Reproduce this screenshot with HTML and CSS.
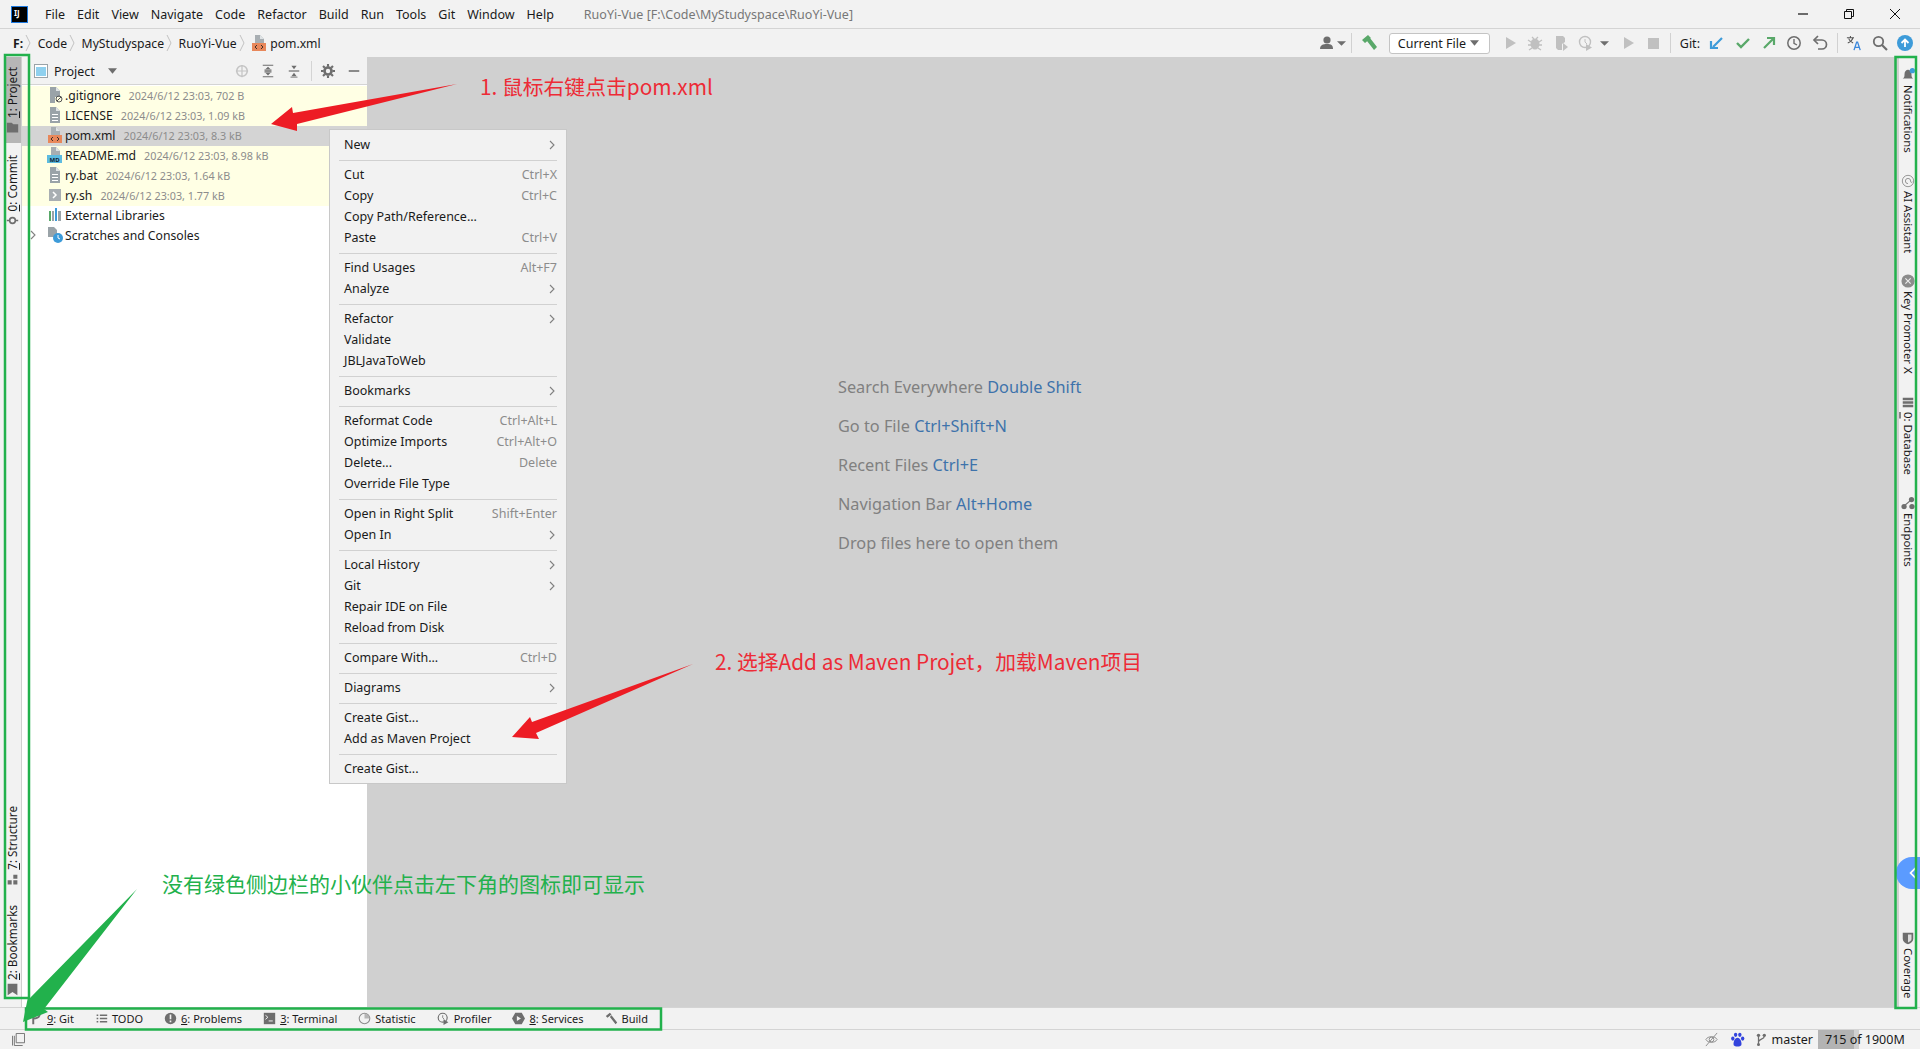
FILE: index.html
```html
<!DOCTYPE html>
<html lang="en">
  <head>
    <meta charset="UTF-8" />
    <title>RuoYi-Vue</title>
    <link rel="stylesheet" href="styles.css">
  </head>
  <body>
    <svg class="defs" width="0" height="0">
      <symbol id="i-doc-lines" viewBox="0 0 16 16"><path d="M3 0h6l4 4v12H3z" fill="#9aa3a8"/><path d="M9 0l4 4H9z" fill="#dfe3e5"/><path d="M5 7h6v1H5zM5 10h6v1H5zM5 13h6v1H5z" fill="#fff"/></symbol>
      <symbol id="i-xml" viewBox="0 0 16 16"><path d="M4 0h5l4 4v4H4z" fill="#a8aeb2"/><path d="M9 0l4 4H9z" fill="#dfe3e5"/><rect x="1" y="8" width="14" height="8" fill="#e8875a"/><path d="M6 10l-2 2 2 2M10 10l2 2-2 2" fill="none" stroke="#40302a"/></symbol>
      <symbol id="i-chev" viewBox="0 0 6 10"><path d="M1 1l4 4-4 4" fill="none" stroke="#808080" stroke-width="1.1"/></symbol>
      <symbol id="i-crumb" viewBox="0 0 6 18"><path d="M1 1l4 8-4 8" fill="none" stroke="#c2c2c2"/></symbol>
    </svg>

    <header class="titlebar">
      <div class="app-logo"><span>IJ</span></div>
      <nav class="menubar">
        <span>File</span><span>Edit</span><span>View</span><span>Navigate</span><span>Code</span><span>Refactor</span><span>Build</span><span>Run</span><span>Tools</span><span>Git</span><span>Window</span><span>Help</span>
      </nav>
      <div class="window-title">RuoYi-Vue [F:\Code\MyStudyspace\RuoYi-Vue]</div>
      <div class="window-controls">
        <svg viewBox="0 0 12 12"><path d="M1 6h10" stroke="#111" stroke-width="1.2"/></svg>
        <svg viewBox="0 0 12 12"><path d="M1.5 3.5h7v7h-7zM3.5 3.5v-2h7v7h-2" fill="none" stroke="#111"/></svg>
        <svg viewBox="0 0 12 12"><path d="M1 1l10 10M11 1L1 11" stroke="#111"/></svg>
      </div>
    </header>

    <div class="navbar">
      <div class="crumbs">
        <b>F:</b><svg class="crumb-sep"><use href="#i-crumb"/></svg>
        <span>Code</span><svg class="crumb-sep"><use href="#i-crumb"/></svg>
        <span>MyStudyspace</span><svg class="crumb-sep"><use href="#i-crumb"/></svg>
        <span>RuoYi-Vue</span><svg class="crumb-sep"><use href="#i-crumb"/></svg>
        <svg class="tree-icon"><use href="#i-xml"/></svg>
        <span>pom.xml</span>
      </div>
      <div class="tools">
        <span class="tool narrow"><svg viewBox="0 0 16 16"><circle cx="8" cy="5" r="3.6" fill="#6e6e6e"/><path d="M1 14c0-4 3-5 7-5s6 1 6 5z" fill="#6e6e6e"/></svg></span>
        <span class="tool tiny"><svg viewBox="0 0 8 8"><path d="M0 2h8L4 6z" fill="#6e6e6e"/></svg></span>
        <i class="tool-sep"></i>
        <span class="tool"><svg viewBox="0 0 16 16"><path d="M1 5l6-5 3 3-6 5zM6 6l3-3 7 9-3 3z" fill="#59a869"/></svg></span>
        <div class="combo">Current File<svg viewBox="0 0 10 6"><path d="M0 0h10L5 6z" fill="#6e6e6e"/></svg></div>
        <span class="tool"><svg viewBox="0 0 16 16"><path d="M4 2l10 6-10 6z" fill="#c0c0c0"/></svg></span>
        <span class="tool"><svg viewBox="0 0 16 16"><ellipse cx="8" cy="9" rx="4.5" ry="5.5" fill="#c0c0c0"/><path d="M1 5l3 2M15 5l-3 2M1 10h3M15 10h-3M2 15l3-2M14 15l-3-2M5 2l2 2M11 2L9 4" stroke="#c0c0c0" stroke-width="1.3"/></svg></span>
        <span class="tool"><svg viewBox="0 0 16 16"><path d="M3 1h7l2 2v4l-3 2v6H5l-2-2z" fill="#c0c0c0"/><path d="M10 8l5 4-5 4z" fill="#c0c0c0"/></svg></span>
        <span class="tool"><svg viewBox="0 0 16 16"><circle cx="7" cy="7" r="5.5" fill="none" stroke="#c0c0c0" stroke-width="1.4"/><path d="M7 4v3l2 2" fill="none" stroke="#c0c0c0"/><path d="M8 9l6 3.5L8 16z" fill="#c0c0c0"/></svg></span>
        <span class="tool tiny spaced"><svg viewBox="0 0 8 8"><path d="M0 2h8L4 6z" fill="#6e6e6e"/></svg></span>
        <span class="tool"><svg viewBox="0 0 16 16"><path d="M4 2l10 6-10 6z" fill="#c0c0c0"/></svg></span>
        <span class="tool"><svg viewBox="0 0 16 16"><rect x="3" y="3" width="11" height="11" fill="#c0c0c0"/></svg></span>
        <i class="tool-sep"></i>
        <span class="git-label">Git:</span>
        <span class="tool git-in"><svg viewBox="0 0 16 16"><path d="M14 3L5 12M3 6v7h7" fill="none" stroke="#3d9bd9" stroke-width="2.2"/></svg></span>
        <span class="tool"><svg viewBox="0 0 16 16"><path d="M2 8l4 4 8-8" fill="none" stroke="#59a869" stroke-width="2.4"/></svg></span>
        <span class="tool"><svg viewBox="0 0 16 16"><path d="M3 13l9-9M6 3h7v7" fill="none" stroke="#59a869" stroke-width="2.2"/></svg></span>
        <span class="tool"><svg viewBox="0 0 16 16"><circle cx="8" cy="8" r="6.2" fill="none" stroke="#6e6e6e" stroke-width="1.5"/><path d="M8 4v4.4l3 1.6" fill="none" stroke="#6e6e6e" stroke-width="1.4"/></svg></span>
        <span class="tool"><svg viewBox="0 0 16 16"><path d="M2 5h8a4 4 0 0 1 0 9H6" fill="none" stroke="#6e6e6e" stroke-width="1.7"/><path d="M6 1L2 5l4 4" fill="none" stroke="#6e6e6e" stroke-width="1.7"/></svg></span>
        <i class="tool-sep"></i>
        <span class="tool"><svg viewBox="0 0 18 18"><path d="M1 3h8M5 1v2M2 9c3-1 5-3 6-6M3 4c1 3 3 4 5 5" fill="none" stroke="#555" stroke-width="1.2"/><path d="M9 17l3-9h1l3 9M10 14h5" fill="none" stroke="#3b87dc" stroke-width="1.5"/></svg></span>
        <span class="tool"><svg viewBox="0 0 16 16"><circle cx="6.5" cy="6.5" r="4.7" fill="none" stroke="#6e6e6e" stroke-width="1.8"/><path d="M10 10l5 5" stroke="#6e6e6e" stroke-width="2.2"/></svg></span>
        <span class="tool"><svg viewBox="0 0 16 16"><circle cx="8" cy="8" r="8" fill="#3d9bd9"/><path d="M4.5 8L8 4.5 11.5 8M8 5v7" fill="none" stroke="#fff" stroke-width="1.8"/></svg></span>
      </div>
    </div>

    <main class="workspace">
      <aside class="strip strip-left">
        <div class="vtab active"><span><u>1</u>: Project</span><svg viewBox="0 0 16 14"><path d="M1 1h6l2 2h6v10H1z" fill="#6e6e6e"/></svg></div>
        <div class="vtab"><span><u>0</u>: Commit</span><svg viewBox="0 0 16 16"><circle cx="8" cy="8" r="3.5" fill="none" stroke="#6e6e6e" stroke-width="2"/><path d="M1 8h3M12 8h3" stroke="#6e6e6e" stroke-width="2"/></svg></div>
        <div class="vtab bottom-first"><span><u>7</u>: Structure</span><svg viewBox="0 0 16 16"><path d="M9 2h5v5H9zM2 9h5v5H2zM9 9h5v5H9z" fill="#6e6e6e"/></svg></div>
        <div class="vtab"><span><u>2</u>: Bookmarks</span><svg viewBox="0 0 16 16"><path d="M2 1h12v14l-6-4-6 4z" fill="#6e6e6e"/></svg></div>
      </aside>

      <section class="project">
        <div class="project-head">
          <svg class="head-pane" viewBox="0 0 14 14"><rect x=".5" y=".5" width="13" height="13" fill="#fff" stroke="#9aa3a8"/><rect x="2" y="3" width="10" height="9" fill="#8fd0ee"/></svg>
          <span>Project</span>
          <svg class="head-caret" viewBox="0 0 10 6"><path d="M0 0h10L5 6z" fill="#6e6e6e"/></svg>
          <div class="head-tools">
            <svg viewBox="0 0 16 16"><circle cx="8" cy="8" r="6" fill="none" stroke="#c4c4c4" stroke-width="1.8"/><path d="M8 1v14M1 8h14" stroke="#c4c4c4" stroke-width="1.4"/></svg>
            <svg viewBox="0 0 16 16"><path d="M2 1.5h12M2 14.5h12M4 9h8M4 7h8" stroke="#6e6e6e" stroke-width="1.2"/><path d="M8 3l3 3H5zM8 13l3-3H5z" fill="#6e6e6e"/></svg>
            <svg viewBox="0 0 16 16"><path d="M2 8h12" stroke="#6e6e6e" stroke-width="1.4"/><path d="M5 2h6L8 6zM5 14h6l-3-4z" fill="#6e6e6e"/><path d="M4 15h8" stroke="#6e6e6e"/></svg>
            <i class="head-sep"></i>
            <svg viewBox="0 0 16 16"><circle cx="8" cy="8" r="4" fill="none" stroke="#6e6e6e" stroke-width="3"/><path d="M8 0v3M8 13v3M0 8h3M13 8h3M2.3 2.3l2 2M11.7 11.7l2 2M2.3 13.7l2-2M11.7 4.300l2-2" stroke="#6e6e6e" stroke-width="2.4"/></svg>
            <svg viewBox="0 0 16 16"><path d="M2 8h12" stroke="#6e6e6e" stroke-width="1.8"/></svg>
          </div>
        </div>
        <ul class="tree">
          <li class="row changed"><svg class="tree-icon" viewBox="0 0 16 16"><path d="M3 0h6l4 4v6H8v6H3z" fill="#9aa3a8"/><path d="M9 0l4 4H9z" fill="#dfe3e5"/><circle cx="12" cy="12" r="3" fill="none" stroke="#555"/><path d="M10 14l4-4" stroke="#555"/></svg><span>.gitignore</span><em>2024/6/12 23:03, 702 B</em></li>
          <li class="row changed"><svg class="tree-icon"><use href="#i-doc-lines"/></svg><span>LICENSE</span><em>2024/6/12 23:03, 1.09 kB</em></li>
          <li class="row selected"><svg class="tree-icon"><use href="#i-xml"/></svg><span>pom.xml</span><em>2024/6/12 23:03, 8.3 kB</em></li>
          <li class="row changed"><svg class="tree-icon" viewBox="0 0 16 16"><path d="M4 0h5l4 4v4H4z" fill="#a8aeb2"/><path d="M9 0l4 4H9z" fill="#dfe3e5"/><rect y="8" width="15" height="8" fill="#5dbbe0"/><text class="md-badge" x="7.500" y="14.500">MD</text></svg><span>README.md</span><em>2024/6/12 23:03, 8.98 kB</em></li>
          <li class="row changed"><svg class="tree-icon"><use href="#i-doc-lines"/></svg><span>ry.bat</span><em>2024/6/12 23:03, 1.64 kB</em></li>
          <li class="row changed"><svg class="tree-icon" viewBox="0 0 16 16"><rect x="2" y="2" width="12" height="12" fill="#a8aeb2"/><path d="M6 5l3 3-3 3" fill="none" stroke="#fff" stroke-width="1.5"/></svg><span>ry.sh</span><em>2024/6/12 23:03, 1.77 kB</em></li>
          <li class="row"><svg class="tree-icon" viewBox="0 0 16 16"><path d="M2 4h2v10H2z" fill="#59a869"/><path d="M5 4h2v10H5z" fill="#9aa3a8"/><path d="M8 1h2v13H8z" fill="#3d9bd9"/><path d="M11 4h3v10h-3z" fill="#9aa3a8"/></svg><span>External Libraries</span></li>
          <li class="row"><svg class="tree-chev"><use href="#i-chev"/></svg><svg class="tree-icon" viewBox="0 0 16 16"><path d="M1 0h6l3 3v7H1z" fill="#9aa3a8"/><circle cx="11" cy="11" r="5" fill="#3d9bd9"/><path d="M11 8v3l2 1" fill="none" stroke="#fff"/></svg><span>Scratches and Consoles</span></li>
        </ul>
      </section>

      <section class="editor">
        <p>Search Everywhere <a>Double Shift</a></p>
        <p>Go to File <a>Ctrl+Shift+N</a></p>
        <p>Recent Files <a>Ctrl+E</a></p>
        <p>Navigation Bar <a>Alt+Home</a></p>
        <p>Drop files here to open them</p>
      </section>

      <aside class="strip strip-right">
        <div class="rtab"><svg viewBox="0 0 16 16"><path d="M2 12c2-1 2-3 2-5 0-3 2-5 4-5s4 2 4 5c0 2 0 4 2 5z" fill="#6e6e6e"/><circle cx="13" cy="3" r="3" fill="#3d9bd9"/></svg><span>Notifications</span></div>
        <div class="rtab"><svg viewBox="0 0 16 16"><circle cx="8" cy="8" r="6.500" fill="none" stroke="#8c8c8c"/><path d="M8 11a3 3 0 1 1 3-3c0 2 1 2 2 1" fill="none" stroke="#8c8c8c"/></svg><span>AI Assistant</span></div>
        <div class="rtab"><svg viewBox="0 0 16 16"><circle cx="8" cy="8" r="7.500" fill="#8c8c8c"/><path d="M5 5l6 6M11 5l-6 6" stroke="#eee" stroke-width="1.300"/></svg><span>Key Promoter X</span></div>
        <div class="rtab"><svg viewBox="0 0 16 16"><path d="M2 3h12v3H2zM2 7h12v3H2zM2 11h12v3H2z" fill="#6e6e6e"/></svg><span><u>0</u>: Database</span></div>
        <div class="rtab"><svg viewBox="0 0 16 16"><circle cx="3.500" cy="12" r="3" fill="#6e6e6e"/><circle cx="12.500" cy="12" r="3" fill="#6e6e6e"/><circle cx="12" cy="4" r="3" fill="#6e6e6e"/><path d="M4 11l7-6" stroke="#6e6e6e" stroke-width="1.500"/></svg><span>Endpoints</span></div>
        <div class="rtab last"><svg viewBox="0 0 16 16"><path d="M2 2h12v7c0 3-3 5-6 6-3-1-6-3-6-6z" fill="#6e6e6e"/><path d="M8 4h4v5c0 2-2 3-4 4z" fill="#dcdcdc"/></svg><span>Coverage</span></div>
        <div class="float-tab"><svg viewBox="0 0 10 14"><path d="M8 1L2 7l6 6" fill="none" stroke="#fff" stroke-width="2.200"/></svg></div>
      </aside>
    </main>

    <footer class="toolwindows">
      <div class="tw"><svg viewBox="0 0 16 16"><path d="M4 1v14M4 8c6 0 8-2 8-6" fill="none" stroke="#6e6e6e" stroke-width="2.400"/></svg><span><u>9</u>: Git</span></div>
      <div class="tw"><svg viewBox="0 0 16 16"><path d="M2 3h2v2H2zM2 7h2v2H2zM2 11h2v2H2zM6 3h9v2H6zM6 7h9v2H6zM6 11h9v2H6z" fill="#6e6e6e"/></svg><span>TODO</span></div>
      <div class="tw"><svg viewBox="0 0 16 16"><circle cx="8" cy="8" r="7" fill="#6e6e6e"/><path d="M7 3h2v6H7zM7 10.500h2v2H7z" fill="#f2f2f2"/></svg><span><u>6</u>: Problems</span></div>
      <div class="tw"><svg viewBox="0 0 16 16"><rect x="1" y="1" width="14" height="14" fill="#6e6e6e"/><path d="M3 4l3 2.500L3 9M7 11h5" fill="none" stroke="#f2f2f2" stroke-width="1.200"/></svg><span><u>3</u>: Terminal</span></div>
      <div class="tw"><svg viewBox="0 0 16 16"><circle cx="8" cy="8" r="6.500" fill="none" stroke="#8c8c8c" stroke-width="1.300"/><path d="M8 8V2a6 6 0 0 1 6 6z" fill="#b5b5b5"/></svg><span>Statistic</span></div>
      <div class="tw"><svg viewBox="0 0 16 16"><circle cx="7" cy="7" r="5.500" fill="none" stroke="#6e6e6e" stroke-width="1.400"/><path d="M7 4v3l2 2" fill="none" stroke="#6e6e6e"/><path d="M8 9l6 3.500L8 16z" fill="#6e6e6e"/></svg><span>Profiler</span></div>
      <div class="tw"><svg viewBox="0 0 16 16"><path d="M4 1h8l4 7-4 7H4L0 8z" fill="#6e6e6e"/><path d="M6 5l5 3-5 3z" fill="#f2f2f2"/></svg><span><u>8</u>: Services</span></div>
      <div class="tw"><svg viewBox="0 0 16 16"><path d="M1 5l5-4 2 2-5 4zM6 6l2-2 7 9-2 2z" fill="#6e6e6e"/></svg><span>Build</span></div>
    </footer>

    <footer class="statusbar">
      <svg class="status-left" viewBox="0 0 14 14"><path d="M4.500 .5h9v10h-9z" fill="none" stroke="#6e6e6e"/><path d="M2.500 3v10.500h9" fill="none" stroke="#6e6e6e"/><path d="M.5 3v10.500" stroke="#6e6e6e"/></svg>
      <div class="status-right">
        <svg viewBox="0 0 16 16"><path d="M2 8c2-4 10-4 12 0-2 4-10 4-12 0z" fill="none" stroke="#8c8c8c"/><circle cx="8" cy="8" r="2.500" fill="none" stroke="#8c8c8c"/><path d="M2 15L14 1" stroke="#8c8c8c"/></svg>
        <svg class="paw" viewBox="0 0 16 16"><ellipse cx="3" cy="7" rx="1.800" ry="2.300" fill="#3344dd"/><ellipse cx="6" cy="3" rx="1.800" ry="2.300" fill="#3344dd"/><ellipse cx="10.500" cy="3" rx="1.800" ry="2.300" fill="#3344dd"/><ellipse cx="13.500" cy="7" rx="1.800" ry="2.300" fill="#3344dd"/><path d="M8 6c-3 0-5 5-4 8 1 2 7 2 8 0 1-3-1-8-4-8z" fill="#3344dd"/></svg>
        <svg class="branch" viewBox="0 0 12 16"><circle cx="3" cy="3" r="2" fill="#6e6e6e"/><circle cx="3" cy="14" r="1.800" fill="#6e6e6e"/><circle cx="10" cy="3" r="2" fill="#6e6e6e"/><path d="M3 3v11M10 4c0 4-7 3-7 7" fill="none" stroke="#6e6e6e" stroke-width="1.500"/></svg>
        <span class="branch-name">master</span>
        <div class="memory">715 of 1900M</div>
      </div>
    </footer>

    <div class="menu">
      <div class="item">New<svg class="sub"><use href="#i-chev"/></svg></div>
      <hr />
      <div class="item">Cut<kbd>Ctrl+X</kbd></div>
      <div class="item">Copy<kbd>Ctrl+C</kbd></div>
      <div class="item">Copy Path/Reference...</div>
      <div class="item">Paste<kbd>Ctrl+V</kbd></div>
      <hr />
      <div class="item">Find Usages<kbd>Alt+F7</kbd></div>
      <div class="item">Analyze<svg class="sub"><use href="#i-chev"/></svg></div>
      <hr />
      <div class="item">Refactor<svg class="sub"><use href="#i-chev"/></svg></div>
      <div class="item">Validate</div>
      <div class="item">JBLJavaToWeb</div>
      <hr />
      <div class="item">Bookmarks<svg class="sub"><use href="#i-chev"/></svg></div>
      <hr />
      <div class="item">Reformat Code<kbd>Ctrl+Alt+L</kbd></div>
      <div class="item">Optimize Imports<kbd>Ctrl+Alt+O</kbd></div>
      <div class="item">Delete...<kbd>Delete</kbd></div>
      <div class="item">Override File Type</div>
      <hr />
      <div class="item">Open in Right Split<kbd>Shift+Enter</kbd></div>
      <div class="item">Open In<svg class="sub"><use href="#i-chev"/></svg></div>
      <hr />
      <div class="item">Local History<svg class="sub"><use href="#i-chev"/></svg></div>
      <div class="item">Git<svg class="sub"><use href="#i-chev"/></svg></div>
      <div class="item">Repair IDE on File</div>
      <div class="item">Reload from Disk</div>
      <hr />
      <div class="item">Compare With...<kbd>Ctrl+D</kbd></div>
      <hr />
      <div class="item">Diagrams<svg class="sub"><use href="#i-chev"/></svg></div>
      <hr />
      <div class="item">Create Gist...</div>
      <div class="item">Add as Maven Project</div>
      <hr />
      <div class="item">Create Gist...</div>
    </div>

    <!-- annotations drawn on top of the screenshot -->
    <svg class="marks" viewBox="0 0 1920 1049">
      <rect x="5" y="55" width="24" height="943" class="box" />
      <rect x="1895.500" y="57" width="20.500" height="951" class="box" />
      <rect x="26" y="1008.500" width="635" height="21" class="box" />
      <polygon points="457,84 293,113 292,107 271,124 297,131 297,124" fill="#ed1c24" />
      <polygon points="693,664 532,722 530,717 512,737 539,739 536,733" fill="#ed1c24" />
      <polygon points="137,889 30,998 28,997 23,1022 48,1012 44,1009" fill="#22b14c" />
    </svg>
    <div class="note red note-one">1. 鼠标右键点击pom.xml</div>
    <div class="note red note-two">2. 选择Add as Maven Projet，加载Maven项目</div>
    <div class="note green note-three">没有绿色侧边栏的小伙伴点击左下角的图标即可显示</div>
  </body>
</html>
```

FILE: styles.css
```css
* {
  box-sizing: border-box;
}

html,
body {
  margin: 0;
  height: 100%;
}

body {
  display: flex;
  flex-direction: column;
  overflow: hidden;
  background-color: #f2f2f2;
  color: #1a1a1a;
  font-family: "Noto Sans", "Open Sans", sans-serif;
  font-size: 12.5px;
}

.defs {
  position: absolute;
}

u {
  text-underline-offset: 1px;
}

/* title bar */
.titlebar {
  display: flex;
  align-items: center;
  height: 29px;
  flex: none;
  border-bottom: 1px solid #d4d4d4;
}

.app-logo {
  width: 17px;
  height: 17px;
  margin-left: 11px;
  background-color: #000;
  border: 1px solid #1f7ae0;
  color: #fff;
  font-size: 8px;
  font-weight: 700;
  line-height: 11px;
  padding-left: 2px;
}

.menubar {
  display: flex;
  gap: 12px;
  margin-left: 17px;
}

.window-title {
  margin-left: 30px;
  color: #777;
}

.window-controls {
  display: flex;
  gap: 34px;
  margin-left: auto;
  margin-right: 19px;
}

.window-controls svg {
  width: 12px;
  height: 12px;
}

/* navigation bar */
.navbar {
  display: flex;
  align-items: center;
  justify-content: space-between;
  height: 28px;
  flex: none;
  padding-left: 13px;
  padding-right: 2px;
}

.crumbs {
  display: flex;
  align-items: center;
  font-size: 12.2px;
}

.crumbs b {
  font-weight: 700;
}

.crumb-sep {
  width: 6px;
  height: 18px;
  margin: 0 6.5px 0 2px;
}

.crumbs .tree-icon {
  margin-right: 3px;
}

.tools {
  display: flex;
  align-items: center;
}

.tool {
  display: flex;
  justify-content: center;
  width: 25.5px;
}

.tool svg {
  width: 16px;
  height: 16px;
}

.tool.narrow {
  width: 16px;
}

.tool.tiny {
  width: 12px;
}

.tool.tiny svg {
  width: 9px;
  height: 9px;
}

.tool.spaced {
  margin-right: 4px;
}

.tool.git-in {
  margin-right: 2px;
}

.tool-sep {
  width: 1px;
  height: 20px;
  margin: 0 4px;
  background-color: #d1d1d1;
}

.combo {
  display: flex;
  align-items: center;
  justify-content: space-between;
  width: 101px;
  height: 21px;
  margin: 0 7px 0 7px;
  padding: 0 10px 0 8px;
  background-color: #fff;
  border: 1px solid #c4c4c4;
  border-radius: 3px;
}

.combo svg {
  width: 9px;
  height: 6px;
}

.git-label {
  margin: 0 3px 0 5px;
}

/* main area */
.workspace {
  display: flex;
  flex: 1;
  min-height: 0;
}

.strip {
  display: flex;
  flex-direction: column;
  flex: none;
}

.strip-left {
  width: 22px;
  padding-left: 4px;
  font-size: 11.7px;
  border-right: 1px solid #cfcfcf;
}

.vtab {
  display: flex;
  flex-direction: column;
  align-items: center;
  width: 16px;
  padding: 12px 0 0;
  gap: 3px;
  white-space: nowrap;
}

.vtab span {
  writing-mode: vertical-rl;
  transform: rotate(180deg);
}

.vtab svg {
  width: 13px;
  height: 13px;
  flex: none;
}

.vtab.active {
  width: 17px;
  height: 86px;
  padding: 10px 1px 0 0;
  background-color: #b6b6b6;
}

.vtab.bottom-first {
  margin-top: auto;
  margin-bottom: 19px;
}

.strip-left .vtab:last-child {
  padding: 0 0 11px;
}

.project {
  display: flex;
  flex-direction: column;
  flex: none;
  width: 345px;
  background-color: #fff;
}

.project-head {
  display: flex;
  align-items: center;
  height: 28px;
  padding-left: 12px;
  padding-top: 1px;
  background-color: #f2f2f2;
  border-bottom: 1px solid #d4d4d4;
}

.head-pane {
  width: 14px;
  height: 14px;
  margin-right: 6px;
}

.head-caret {
  width: 9px;
  height: 6px;
  margin-left: 13px;
}

.head-tools {
  display: flex;
  align-items: center;
  gap: 12px;
  margin-left: auto;
  margin-right: 6px;
}

.head-tools svg {
  width: 14px;
  height: 14px;
}

.head-sep {
  width: 1px;
  height: 20px;
  margin: 0 -2.5px;
  background-color: #d4d4d4;
}

.tree {
  margin: 1px 0 0;
  padding: 0;
  font-size: 12.2px;
  list-style: none;
}

.row {
  display: flex;
  align-items: center;
  height: 20px;
  padding-left: 25px;
  padding-bottom: 2px;
  white-space: nowrap;
}

.row em {
  margin-left: 8px;
  color: #8c8c8c;
  font-size: 10.8px;
  font-style: normal;
}

.row.changed {
  background-color: #ffffe4;
}

.row.selected {
  background-color: #d4d4d4;
}

.tree-icon {
  width: 16px;
  height: 16px;
  flex: none;
  margin-right: 2px;
}

.tree-chev {
  width: 6px;
  height: 10px;
  margin-left: -17px;
  margin-right: 11px;
}

.md-badge {
  fill: #123;
  font-size: 6px;
  font-weight: 700;
  text-anchor: middle;
}

.editor {
  flex: 1;
  padding: 311px 0 0 471px;
  background-color: #d0d0d0;
  color: #808080;
  font-size: 16.3px;
}

.editor p {
  margin: 0;
  line-height: 39px;
}

.editor a {
  color: #3e73ab;
}

.strip-right {
  position: relative;
  width: 25px;
  padding: 11px 0 0 4px;
  gap: 21px;
  font-size: 11.4px;
  background: linear-gradient(to right, #d0d0d0 4px, #f2f2f2 4px);
}

.rtab {
  display: flex;
  flex-direction: column;
  align-items: center;
  gap: 3px;
  width: 18px;
  white-space: nowrap;
}

.rtab span {
  writing-mode: vertical-rl;
}

.rtab svg {
  width: 14px;
  height: 14px;
  flex: none;
}

.rtab.last {
  margin-top: auto;
  padding-bottom: 9px;
}

.float-tab {
  position: absolute;
  left: 1px;
  top: 800px;
  display: flex;
  align-items: center;
  justify-content: center;
  width: 28px;
  height: 32px;
  background-color: #5b9bff;
  border-radius: 16px 0 0 16px;
  padding-left: 6px;
}

.float-tab svg {
  width: 8px;
  height: 12px;
}

/* bottom bars */
.toolwindows {
  display: flex;
  align-items: center;
  gap: 21px;
  height: 22px;
  flex: none;
  padding-left: 30px;
  font-size: 11px;
  border-top: 1px solid #d4d4d4;
}

.tw {
  display: flex;
  align-items: center;
  gap: 4px;
  white-space: nowrap;
}

.tw svg {
  width: 13px;
  height: 13px;
}

.statusbar {
  display: flex;
  align-items: center;
  justify-content: space-between;
  height: 20px;
  flex: none;
  padding-left: 12px;
  border-top: 1px solid #d4d4d4;
}

.status-left {
  width: 13px;
  height: 13px;
}

.status-right {
  display: flex;
  align-items: center;
  height: 100%;
}

.status-right svg {
  width: 15px;
  height: 15px;
  margin-right: 11px;
}

.status-right .branch {
  width: 10px;
  margin-right: 6px;
}

.branch-name {
  margin-right: 5px;
}

.memory {
  width: 102px;
  height: 100%;
  padding-left: 7px;
  line-height: 19px;
  background: linear-gradient(to right, #b3b3b3 36px, #d0d0d0 36px, #d0d0d0 41px, transparent 41px);
}

/* context menu */
.menu {
  position: absolute;
  left: 329px;
  top: 129px;
  width: 238px;
  height: 655px;
  padding: 5px 0;
  background-color: #f2f2f2;
  border: 1px solid #c8c8c8;
}

.item {
  display: flex;
  align-items: center;
  justify-content: space-between;
  height: 21px;
  padding: 0 9px 2px 14px;
}

.item kbd {
  color: #8c8c8c;
  font-family: inherit;
}

.sub {
  width: 6px;
  height: 10px;
  margin-right: 2px;
}

.menu hr {
  height: 1px;
  margin: 4px 9px;
  border: 0;
  background-color: #d1d1d1;
}

/* annotations */
.marks {
  position: absolute;
  left: 0;
  top: 0;
  width: 1920px;
  height: 1049px;
}

.box {
  fill: none;
  stroke: #22b14c;
  stroke-width: 2.500;
}

.note {
  position: absolute;
  font-family: "Noto Sans CJK SC", "Noto Sans", sans-serif;
  font-size: 20.8px;
  line-height: 28px;
  white-space: nowrap;
}

.red {
  color: #ed2b36;
}

.green {
  color: #22b14c;
  font-size: 21px;
}

.note-one {
  left: 480px;
  top: 72px;
}

.note-two {
  left: 715px;
  top: 647px;
}

.note-three {
  left: 162px;
  top: 869px;
}
```
